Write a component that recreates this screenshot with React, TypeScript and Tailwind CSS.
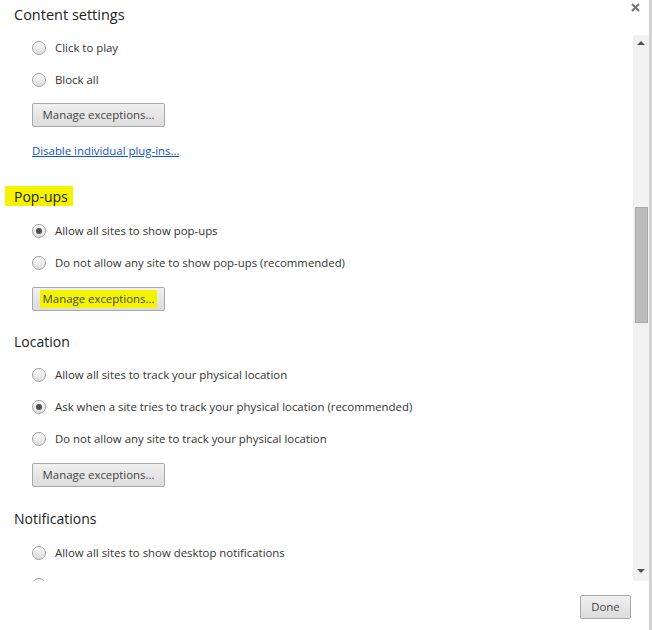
import React from 'react';

const font = { fontFamily: '"Open Sans", "Noto Sans", sans-serif' };

function Radio({ checked = false }: { checked?: boolean }) {
  return (
    <span className="flex h-[14px] w-[14px] shrink-0 items-center justify-center rounded-full border border-[#a3a3a3] bg-gradient-to-b from-[#fafafa] to-[#dedede] shadow-[inset_0_1px_1px_rgba(255,255,255,0.9)]">
      {checked && <span className="h-[6px] w-[6px] rounded-full bg-[#4d4d4d]" />}
    </span>
  );
}

function RadioRow({ label, checked }: { label: string; checked?: boolean }) {
  return (
    <div className="flex h-8 items-center gap-[9px] pl-[32px] text-[11.4px] text-[#333]">
      <Radio checked={checked} />
      <span>{label}</span>
    </div>
  );
}

function ManageButton({ className = '', highlight = false }: { className?: string; highlight?: boolean }) {
  return (
    <div className={`ml-[32px] flex h-[24px] w-[133px] items-center justify-center rounded-[2px] border border-[#a8a8a8] bg-gradient-to-b from-[#f0f0f0] to-[#dcdcdc] text-[11.4px] text-[#444] ${className}`}>
      <span className={highlight ? 'bg-[#f4f400] px-[3px] leading-[18px]' : ''}>Manage exceptions...</span>
    </div>
  );
}

function Heading({ text, className = '', highlight = false }: { text: string; className?: string; highlight?: boolean }) {
  return (
    <div className={`flex h-[20px] items-center text-[14px] text-[#222] ${className}`}>
      {highlight ? (
        <span className="ml-[5px] flex h-[20px] items-center bg-[#f4f400] pl-[9px] pr-[5px]">{text}</span>
      ) : (
        <span className="pl-[14px]">{text}</span>
      )}
    </div>
  );
}

function Scrollbar() {
  return (
    <div className="relative flex w-[16px] flex-col items-center bg-[#f1f1f1]">
      <div className="mt-[6px] h-0 w-0 border-x-[4px] border-b-[4px] border-x-transparent border-b-[#505050]" />
      <div className="mt-[162px] h-[116px] w-[13px] border border-[#a9a9a9] bg-[#bcbcbc]" />
      <div className="mt-auto mb-[8px] h-0 w-0 border-x-[4px] border-t-[4px] border-x-transparent border-t-[#505050]" />
    </div>
  );
}

export default function App() {
  return (
    <div className="flex h-[630px] w-[652px] flex-col border-r-[3px] border-[#d2d2d2] bg-white" style={font}>
      <div className="relative h-[35px] shrink-0">
        <div className="pl-[14px] pt-[4px] text-[14.5px] leading-[22px] text-[#222]">Content settings</div>
        <svg className="absolute left-[631px] top-[3px]" width="9" height="9" viewBox="0 0 9 9">
          <path d="M1 1L8 8M8 1L1 8" stroke="#747474" strokeWidth="2" />
        </svg>
      </div>
      <div className="flex h-[546px] shrink-0">
        <div className="flex-1 overflow-hidden">
          <div className="-mt-[3px]">
            <RadioRow label="Click to play" />
            <RadioRow label="Block all" />
            <ManageButton className="mt-[7px]" />
            <div className="mt-[16px] h-[16px] pl-[32px] text-[11.4px] leading-[16px] text-[#1155cc] underline">Disable individual plug-ins...</div>
            <Heading text="Pop-ups" highlight className="mt-[27px]" />
            <div className="mt-[9px]">
              <RadioRow label="Allow all sites to show pop-ups" checked />
              <RadioRow label="Do not allow any site to show pop-ups (recommended)" />
            </div>
            <ManageButton className="mt-[8px]" highlight />
            <Heading text="Location" className="mt-[20px]" />
            <div className="mt-[8px]">
              <RadioRow label="Allow all sites to track your physical location" />
              <RadioRow label="Ask when a site tries to track your physical location (recommended)" checked />
              <RadioRow label="Do not allow any site to track your physical location" />
            </div>
            <ManageButton className="mt-[8px]" />
            <Heading text="Notifications" className="mt-[21px]" />
            <div className="mt-[9px]">
              <RadioRow label="Allow all sites to show desktop notifications" />
              <RadioRow label="Ask when a site wants to show desktop notifications (recommended)" checked />
            </div>
          </div>
        </div>
        <Scrollbar />
      </div>
      <div className="flex flex-1 items-start justify-end pr-[18px] pt-[14px]">
        <div className="flex h-[24px] w-[51px] items-center justify-center rounded-[2px] border border-[#a8a8a8] bg-gradient-to-b from-[#f0f0f0] to-[#dcdcdc] text-[11.4px] text-[#444]">
          Done
        </div>
      </div>
    </div>
  );
}
